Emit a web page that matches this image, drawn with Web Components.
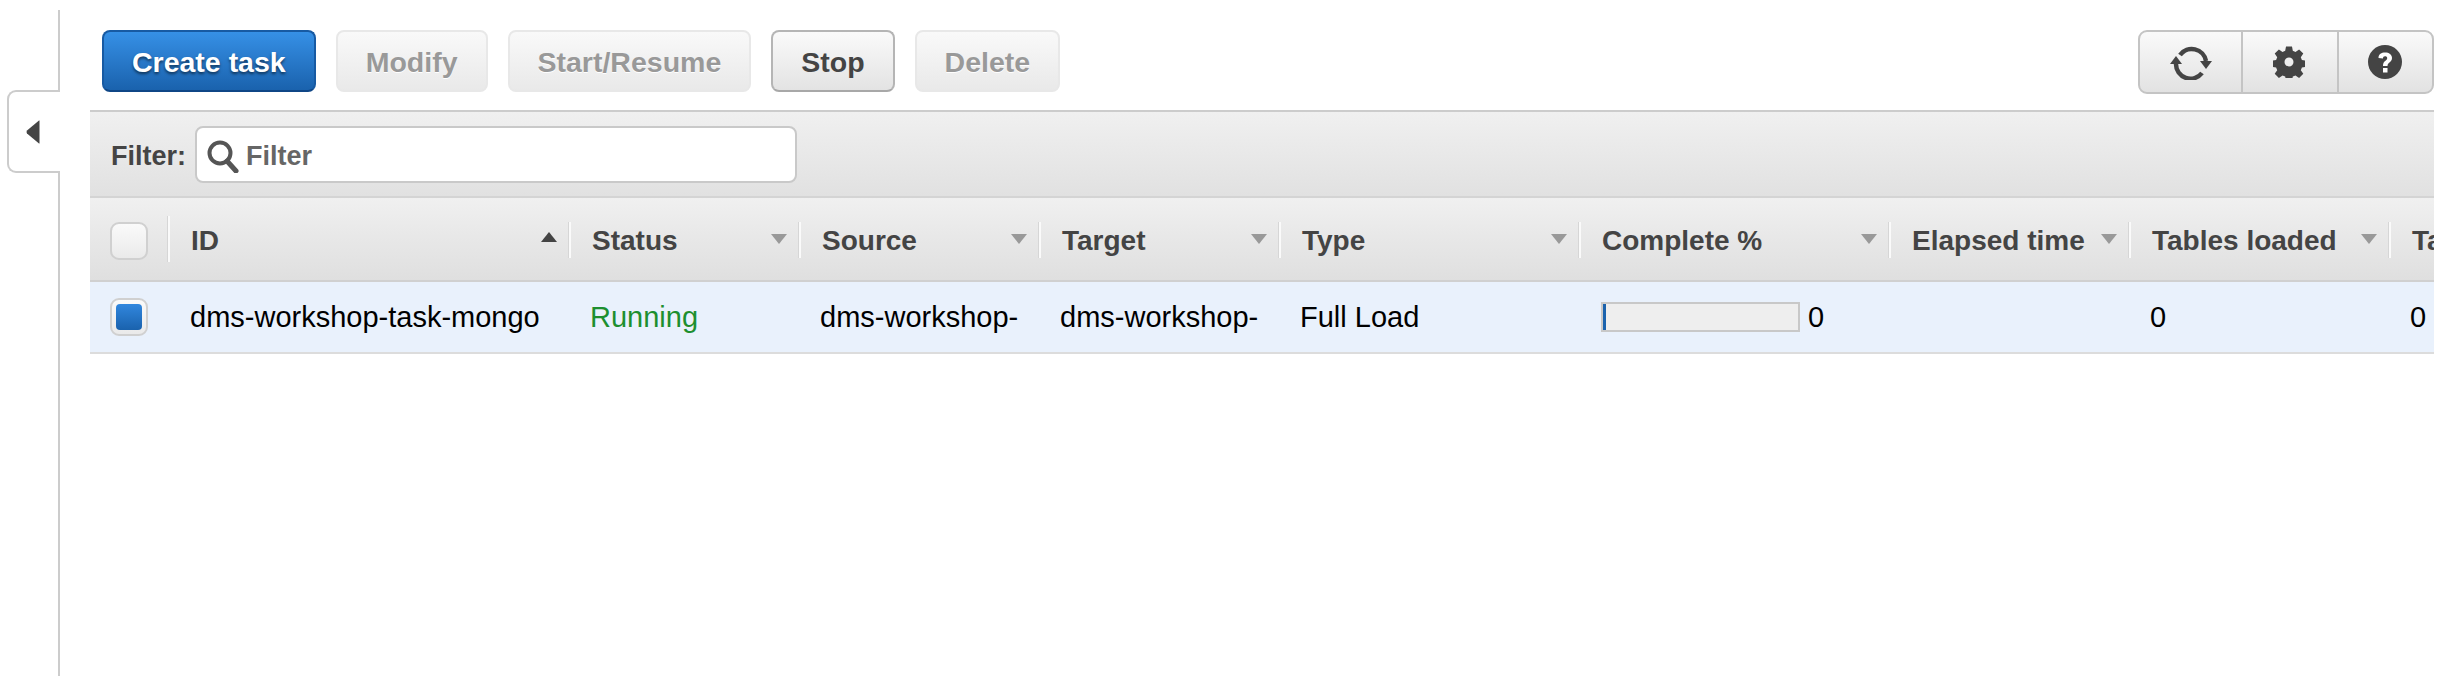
<!DOCTYPE html>
<html lang="en">
<head>
<meta charset="utf-8">
<title>Database migration tasks</title>
<style>
  html, body { margin: 0; padding: 0; background: #fff; }
  body { font-family: "Liberation Sans", Arial, sans-serif; font-size: 29px; color: #000; }
</style>
</head>
<body>
<dms-console>
  <dms-toolbar>
    <dms-button variant="primary">Create task</dms-button>
    <dms-button disabled>Modify</dms-button>
    <dms-button disabled>Start/Resume</dms-button>
    <dms-button>Stop</dms-button>
    <dms-button disabled>Delete</dms-button>
    <dms-icon-group slot="end"></dms-icon-group>
  </dms-toolbar>
  <dms-filter-bar></dms-filter-bar>
  <dms-task-table>
    <dms-table-head>
      <dms-head-cell first><dms-checkbox></dms-checkbox></dms-head-cell>
      <dms-head-cell sort="asc">ID</dms-head-cell>
      <dms-head-cell sort="none">Status</dms-head-cell>
      <dms-head-cell sort="none">Source</dms-head-cell>
      <dms-head-cell sort="none">Target</dms-head-cell>
      <dms-head-cell sort="none">Type</dms-head-cell>
      <dms-head-cell sort="none">Complete %</dms-head-cell>
      <dms-head-cell sort="none">Elapsed time</dms-head-cell>
      <dms-head-cell sort="none">Tables loaded</dms-head-cell>
      <dms-head-cell sort="none">Tables loading</dms-head-cell>
    </dms-table-head>
    <dms-table-row>
      <dms-cell wide><dms-checkbox checked></dms-checkbox></dms-cell>
      <dms-cell wide>dms-workshop-task-mongo</dms-cell>
      <dms-cell color="#1d8f2f">Running</dms-cell>
      <dms-cell>dms-workshop-</dms-cell>
      <dms-cell>dms-workshop-</dms-cell>
      <dms-cell>Full Load</dms-cell>
      <dms-cell wide><dms-progress value="0"></dms-progress></dms-cell>
      <dms-cell></dms-cell>
      <dms-cell>0</dms-cell>
      <dms-cell>0</dms-cell>
    </dms-table-row>
  </dms-task-table>
</dms-console>

<script>
// small helper so each component only declares its markup
function define(name, markup) {
  class Comp extends HTMLElement {
    constructor() {
      super();
      this.attachShadow({ mode: 'open' });
    }
    connectedCallback() {
      this.shadowRoot.innerHTML = typeof markup === 'function' ? markup(this) : markup;
    }
  }
  customElements.define(name, Comp);
}

define('dms-console', `
  <style>
    :host { display: flex; height: 676px; overflow: hidden; }
    .side { flex: none; width: 58px; position: relative; margin-top: 10px; border-right: 2px solid #ccc; }
    /* collapse tab sits over the divider line */
    .tab {
      position: absolute; left: 7px; top: 80px; width: 51px; height: 79px;
      background: #fff; border: 2px solid #ccc; border-right: 0; border-radius: 9px 0 0 9px;
      display: flex; align-items: center; justify-content: center;
    }
    .tab::after { content: ""; position: absolute; right: -2px; top: 0; bottom: 0; width: 2px; background: #fff; }
    .tab svg { display: block; margin-left: -4px; }
    main { flex: 1; min-width: 0; margin: 0 28px 0 30px; overflow: hidden; }
  </style>
  <div class="side">
    <div class="tab">
      <svg width="14" height="24" viewBox="0 0 14 24"><path d="M13 0.5 L13.5 0.5 L13.5 23.5 L13 23.5 L1 13.5 Q0 12 1 10.5 Z" fill="#444"/></svg>
    </div>
  </div>
  <main><slot></slot></main>
`);

define('dms-toolbar', `
  <style>
    :host { display: flex; align-items: flex-start; padding: 30px 0 16px 12px; height: 64px; }
    .left { display: flex; gap: 20px; }
    .end { margin-left: auto; }
  </style>
  <div class="left"><slot></slot></div>
  <div class="end"><slot name="end"></slot></div>
`);

define('dms-button', `
  <style>
    :host {
      display: block; box-sizing: border-box; height: 62px; padding: 0 28px;
      border: 2px solid #b5b5b5; border-radius: 8px;
      background: linear-gradient(#fafafa, #e3e3e3);
      font: bold 28.5px/60px "Liberation Sans", Arial, sans-serif; color: #444;
      white-space: nowrap; border-bottom-color: #a8a8a8;
    }
    :host([variant="primary"]) {
      background: linear-gradient(#3690e6, #1a62ad);
      border-color: #175aa3; border-bottom-color: #0f4686;
      color: #fff; text-shadow: 0 2px 3px rgba(0,0,0,.55);
    }
    :host([disabled]) {
      background: linear-gradient(#f9f9f9, #e9e9e9);
      border-color: #e8e8e8; color: #999; text-shadow: 0 1px 0 #fff;
    }
  </style>
  <slot></slot>
`);

define('dms-icon-group', `
  <style>
    :host {
      display: flex; box-sizing: border-box; width: 296px; height: 64px;
      border: 2px solid #c4c4c4; border-radius: 9px;
      background: linear-gradient(#fafafa, #e2e2e2);
    }
    div { display: flex; align-items: center; justify-content: center; flex: none; }
    .a { width: 101px; }
    .b { width: 94px; border-left: 2px solid #c4c4c4; border-right: 2px solid #c4c4c4; padding-right: 3px; box-sizing: border-box; width: 98px; }
    .c { flex: 1; padding-right: 2px; }
    svg { display: block; fill: #444; }
  </style>
  <div class="a">
    <svg width="42" height="36" viewBox="0 0 42 36">
      <path d="M10 11 A14.500 14.500 0 0 1 36 17" fill="none" stroke="#444" stroke-width="4.500"/>
      <path d="M32 29 A14.500 14.500 0 0 1 6 20" fill="none" stroke="#444" stroke-width="4.500"/>
      <path d="M30 17 L42 17 L36 25 Z"/>
      <path d="M0 20 L12 20 L6 12 Z"/>
    </svg>
  </div>
  <div class="b">
    <svg width="32" height="32" viewBox="0 0 32 32">
      <path fill-rule="evenodd" d="M13 0.500h6l.8 4.300 2.700 1.100 3.600-2.500 4.200 4.200-2.500 3.600 1.100 2.700 4.300.8v6l-4.300.8-1.100 2.700 2.500 3.600-4.200 4.200-3.600-2.500-2.700 1.100-.8 4.300h-6l-.8-4.300-2.700-1.100-3.600 2.500-4.200-4.200 2.500-3.600-1.100-2.700-4.300-.8v-6l4.300-.8 1.100-2.700-2.500-3.600 4.200-4.200 3.600 2.500 2.700-1.100z M16 11.500a4.500 4.500 0 1 0 0 9a4.500 4.500 0 1 0 0-9z"/>
    </svg>
  </div>
  <div class="c">
    <svg width="34" height="34" viewBox="0 0 34 34">
      <circle cx="17" cy="17" r="17"/>
      <path d="M10.500 13 C10.500 9 13.500 7.500 17 7.500 C21 7.500 24 9.500 24 13 C24 17.500 19.500 17 19.500 21 L15 21 C15 15.500 19.200 16 19.200 13 C19.200 11.700 18.300 11.200 17 11.200 C15.700 11.200 15 12 15 13.500 Z" fill="#fff"/>
      <rect x="15" y="23" width="4.500" height="4.500" fill="#fff"/>
    </svg>
  </div>
`);

define('dms-filter-bar', `
  <style>
    :host {
      display: flex; align-items: center; box-sizing: border-box; height: 88px; padding: 0 0 0 21px;
      border-top: 2px solid #ccc; border-bottom: 2px solid #d4d4d4;
      background: linear-gradient(#f0f0f0, #e1e1e1);
      font: 29px "Liberation Sans", Arial, sans-serif;
    }
    b { color: #444; width: 84px; flex: none; font-size: 27px; padding-top: 4px; }
    .box {
      display: flex; align-items: center; box-sizing: border-box; width: 602px; height: 57px; margin-top: 1px;
      background: #fff; border: 2px solid #c9c9c9; border-radius: 8px; padding-left: 10px; gap: 7px;
      color: #666; font-weight: bold; font-size: 27px;
    }
    .box span { padding-top: 3px; }
    svg { display: block; flex: none; margin-top: 3px; }
  </style>
  <b>Filter:</b>
  <div class="box">
    <svg width="32" height="33" viewBox="0 0 32 33">
      <circle cx="13" cy="13" r="10.500" fill="none" stroke="#555" stroke-width="4"/>
      <path d="M20 21 L29 31" stroke="#555" stroke-width="5" stroke-linecap="round"/>
    </svg>
    <span>Filter</span>
  </div>
`);

define('dms-task-table', `
  <style>
    :host { display: block; --cols: 80px 401px 230px 240px 240px 300px 310px 240px 260px 240px; }
  </style>
  <slot></slot>
`);

define('dms-table-head', `
  <style>
    :host {
      display: grid; grid-template-columns: var(--cols); height: 84px; box-sizing: border-box; width: max-content;
      min-width: 100%; border-bottom: 2px solid #d0d0d0;
      background: linear-gradient(#f0f0f0, #dfdfdf);
    }
  </style>
  <slot></slot>
`);

define('dms-head-cell', el => {
  const sort = el.getAttribute('sort');
  const caret = sort === 'asc'
    ? '<svg width="16" height="10" viewBox="0 0 16 10" style="margin-top:-4px"><path d="M8 0 L16 10 L0 10 Z" fill="#444"/></svg>'
    : sort === 'none'
      ? '<svg width="16" height="10" viewBox="0 0 16 10"><path d="M0 0 L16 0 L8 10 Z" fill="#999"/></svg>'
      : '';
  return `
  <style>
    :host {
      display: flex; align-items: center; box-sizing: border-box; padding: 0 14px 0 21px; position: relative;
      font: bold 28px "Liberation Sans", Arial, sans-serif; color: #444; white-space: nowrap; overflow: hidden;
    }
    :host([first]) { padding: 0 0 0 20px; }
    span { flex: 1; padding-top: 4px; }
    /* white sep line between header cells */
    i { position: absolute; right: 0; top: 24px; height: 36px; width: 2px; background: #fafafa; box-shadow: -1px 0 0 #d6d6d6; }
    :host([first]) i { top: 18px; height: 46px; }
    svg { flex: none; display: block; }
  </style>
  <span><slot></slot></span>${caret}<i></i>`;
});

define('dms-table-row', `
  <style>
    :host {
      display: grid; grid-template-columns: var(--cols); height: 72px; box-sizing: border-box; width: max-content;
      min-width: 100%; background: #e9f1fc; border-bottom: 2px solid #dcdcdc;
    }
  </style>
  <slot></slot>
`);

define('dms-cell', el => `
  <style>
    :host {
      display: flex; align-items: center; box-sizing: border-box; padding: 0 0 0 19px; overflow: hidden;
      font: 29px "Liberation Sans", Arial, sans-serif; color: ${el.getAttribute('color') || '#000'}; white-space: nowrap;
    }
    :host([wide]) { padding-left: 20px; }
  </style>
  <slot></slot>
`);

define('dms-checkbox', el => `
  <style>
    :host {
      display: flex; align-items: center; justify-content: center; box-sizing: border-box; width: 38px; height: 38px;
      border: 2px solid #d0d0d0; border-radius: 9px; background: linear-gradient(#fafafa, #eaeaea);
    }
    div { width: 26px; height: 26px; border-radius: 4px; background: linear-gradient(#3187de, #1a62ad); }
  </style>
  ${el.hasAttribute('checked') ? '<div></div>' : ''}
`);

define('dms-progress', el => `
  <style>
    :host { display: flex; align-items: center; }
    .track { box-sizing: border-box; width: 199px; height: 30px; border: 2px solid #c8c8c8; background: #eee; }
    .bar { width: 3px; height: 100%; background: #1a62ad; }
    span { margin-left: 8px; }
  </style>
  <div class="track"><div class="bar"></div></div><span>${el.getAttribute('value')}</span>
`);
</script>
</body>
</html>
